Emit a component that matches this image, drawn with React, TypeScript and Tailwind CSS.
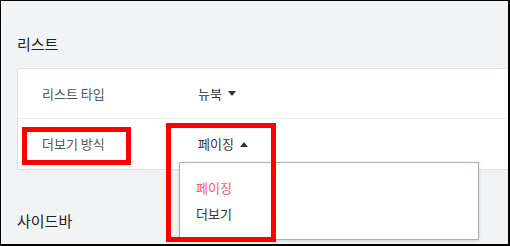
const font = { fontFamily: '"Noto Sans CJK KR", "Noto Sans", sans-serif' };

function Caret({ up = false }: { up?: boolean }) {
  return (
    <svg width="8" height="5" viewBox="0 0 8 5" className="ml-[6px]">
      {up ? <path d="M0 5 L4 0 L8 5 Z" fill="#333" /> : <path d="M0 0 L8 0 L4 5 Z" fill="#333" />}
    </svg>
  );
}

export default function App() {
  return (
    <div
      className="relative w-[510px] h-[246px] overflow-hidden bg-[#f2f3f5] border-l border-t border-r-2 border-b-2 border-black"
      style={font}
    >
      <div className="pl-[16px] pt-[32px]">
        <h2 className="text-[15px] leading-[22px] text-[#222]">리스트</h2>

        {/* Settings card */}
        <div className="mt-[13px] w-[520px] bg-white border border-[#dde3eb]">
          <div className="flex items-center h-[50px] pl-6 border-b border-[#eceef1]">
            <div className="w-[156px] text-[13px] text-[#555]">리스트 타입</div>
            <div className="flex items-center text-[13px] text-[#333]">
              뉴북
              <Caret />
            </div>
          </div>
          <div className="flex items-center h-[50px] pl-6">
            <div className="w-[156px] text-[13px] text-[#555]">더보기 방식</div>
            <div className="flex items-center text-[13px] text-[#333]">
              페이징
              <Caret up />
            </div>
          </div>
        </div>

        <h2 className="mt-[40px] text-[15px] leading-[22px] text-[#222]">사이드바</h2>
      </div>

      {/* Dropdown menu */}
      <div className="absolute left-[178px] top-[161px] w-[300px] h-[78px] bg-white border border-[#a9b0bb] shadow-[0_1px_3px_rgba(0,0,0,0.15)] pt-[12px]">
        <div className="h-[26px] flex items-center pl-4 text-[13px] text-[#f25a6a]">페이징</div>
        <div className="h-[26px] flex items-center pl-4 text-[13px] text-[#333]">더보기</div>
      </div>

      {/* Annotation boxes */}
      <div className="absolute left-[21px] top-[126px] w-[109px] h-[38px] border-[5px] border-[#ff0000]" />
      <div className="absolute left-[165px] top-[122px] w-[110px] h-[119px] border-[5px] border-[#ff0000]" />
    </div>
  );
}
